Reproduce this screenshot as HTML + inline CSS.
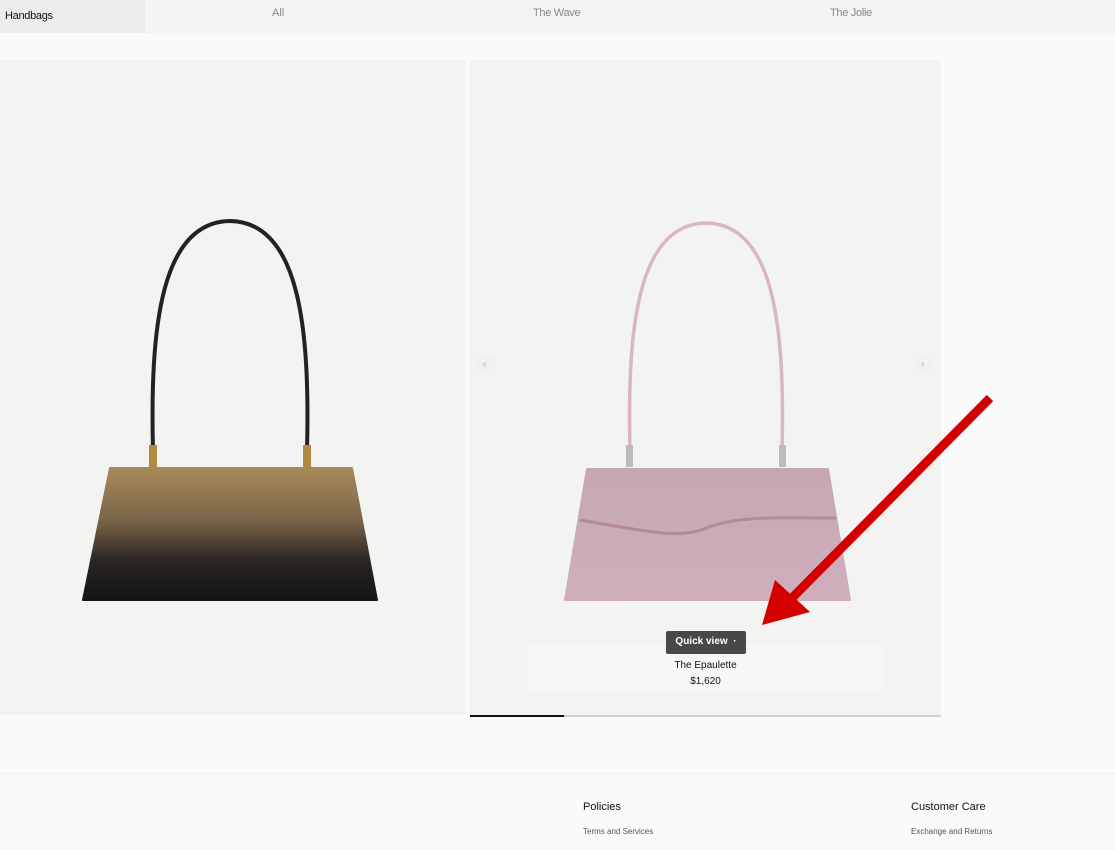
<!DOCTYPE html>
<html><head><style>
body{margin:0;width:1115px;height:850px;background:#fafafa;font-family:"Liberation Sans",sans-serif;position:relative;overflow:hidden}
.a{position:absolute}
</style></head><body>
<div class="a" style="left:0;top:0;width:1115px;height:33px;background:#f4f4f4"></div>
<div class="a" style="left:0;top:0;width:145px;height:33px;background:#ececec"></div>
<div class="a" style="left:5px;top:10px;font-size:11px;color:#111;letter-spacing:-0.3px">Handbags</div>
<div class="a" style="left:272px;top:7px;font-size:11px;color:#888">All</div>
<div class="a" style="left:533px;top:7px;font-size:11px;color:#888;letter-spacing:-0.3px">The Wave</div>
<div class="a" style="left:830px;top:7px;font-size:11px;color:#888;letter-spacing:-0.3px">The Jolie</div>
<div class="a" style="left:0;top:60px;width:465px;height:655px;background:#f3f3f1"></div>
<div class="a" style="left:470px;top:60px;width:471px;height:655px;background:#f3f3f1"></div>
<svg class="a" style="left:0;top:0" width="1115" height="850">
<defs>
<linearGradient id="g1" x1="0" y1="0" x2="0" y2="1"><stop offset="0" stop-color="#a88a5a"/><stop offset=".4" stop-color="#7a6448"/><stop offset=".7" stop-color="#2a2624"/><stop offset="1" stop-color="#141414"/></linearGradient>
<linearGradient id="g2" x1="0" y1="0" x2="0" y2="1"><stop offset="0" stop-color="#c4a8b0"/><stop offset="1" stop-color="#d0aebc"/></linearGradient>
</defs>
<path d="M153 450 C150 330 160 222 230 221 C300 222 310 330 307 450" fill="none" stroke="#222" stroke-width="4"/>
<rect x="149" y="445" width="8" height="24" fill="#b08a40"/><rect x="303" y="445" width="8" height="24" fill="#b08a40"/>
<path d="M110 468 L352 468 L377 600 L83 600 Z" fill="url(#g1)" stroke="url(#g1)" stroke-width="2" stroke-linejoin="round"/>
<path d="M630 450 C627 330 637 224 706 223 C775 224 785 330 782 450" fill="none" stroke="#d8b8c0" stroke-width="3.5"/>
<rect x="626" y="445" width="7" height="22" fill="#bbb"/><rect x="779" y="445" width="7" height="22" fill="#bbb"/>
<path d="M587 469 L828 469 L850 600 L565 600 Z" fill="url(#g2)" stroke="url(#g2)" stroke-width="2" stroke-linejoin="round"/>
<path d="M580 520 C640 530 680 540 706 528 C740 515 780 518 836 518" fill="none" stroke="#b38a98" stroke-width="3"/>
<circle cx="486" cy="363" r="9" fill="#f0f0ee"/><circle cx="924" cy="363" r="9" fill="#f0f0ee"/>
<text x="483" y="367" font-size="10" fill="#aaa">‹</text><text x="921" y="367" font-size="10" fill="#aaa">›</text>
<line x1="990" y1="398" x2="790" y2="600" stroke="#d40000" stroke-width="9"/>
<polygon points="762,625 775,580 810,612" fill="#d40000"/>
</svg>
<div class="a" style="left:528px;top:646px;width:355px;height:46px;background:#f7f7f6;border-radius:3px"></div>
<div class="a" style="left:666px;top:631px;width:80px;height:23px;background:#484848;border-radius:2px;color:#fff;font-size:10px;font-weight:bold;line-height:22px;text-align:center">Quick view &nbsp;·</div>
<div class="a" style="left:528px;top:658px;width:355px;text-align:center;font-size:10px;color:#111;line-height:16px">The Epaulette<br>$1,620</div>
<div class="a" style="left:470px;top:715px;width:471px;height:2px;background:#d0d0d0"></div>
<div class="a" style="left:470px;top:715px;width:94px;height:2px;background:#111"></div>
<div class="a" style="left:0;top:773px;width:1115px;height:1px;background:#f0f0f0"></div>
<div class="a" style="left:583px;top:801px;font-size:11px;color:#111">Policies</div>
<div class="a" style="left:583px;top:827px;font-size:8px;color:#555">Terms and Services</div>
<div class="a" style="left:911px;top:801px;font-size:11px;color:#111">Customer Care</div>
<div class="a" style="left:911px;top:827px;font-size:8px;color:#555">Exchange and Returns</div>
</body></html>
